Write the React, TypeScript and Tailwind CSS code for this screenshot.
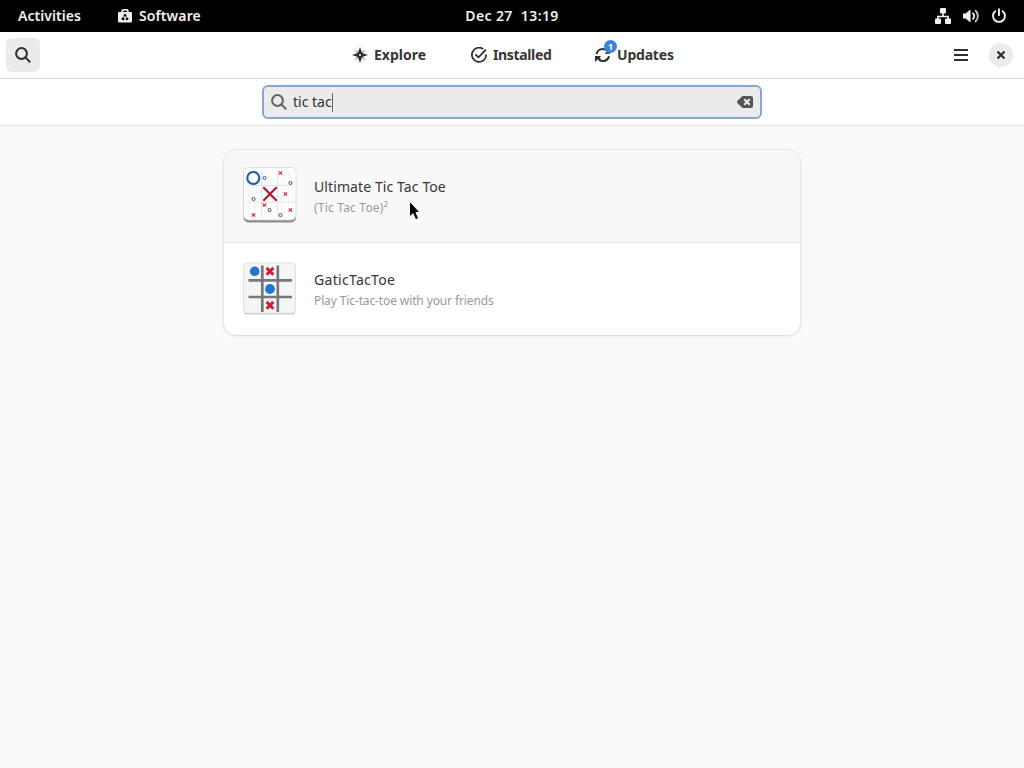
import type { ReactNode } from "react";

const font = "font-['Noto_Sans',sans-serif]";

function SearchIcon({ className }: { className?: string }) {
  return (
    <svg viewBox="0 0 16 16" className={className} fill="none" stroke="currentColor" strokeWidth="2">
      <circle cx="6.5" cy="6.5" r="5.4" />
      <path d="M10.4 10.4 15.2 15.2" />
    </svg>
  );
}

function BagIcon() {
  return (
    <svg viewBox="0 0 16 16" className="h-4 w-4">
      <path d="M5.200 4.500V3a1.200 1.200 0 0 1 1.200-1.200h3.200A1.200 1.200 0 0 1 10.800 3v1.500" fill="none" stroke="#eee" strokeWidth="1.800" />
      <path d="M2 4h12a1 1 0 0 1 1 1v8a1.500 1.500 0 0 1-1.500 1.500h-11A1.500 1.500 0 0 1 1 13V5a1 1 0 0 1 1-1z" fill="#eee" />
      <path d="M8 5.200 10 8.400H6z" fill="#000" />
      <rect x="4.700" y="9.500" width="2.600" height="2.600" fill="#000" />
      <circle cx="10" cy="10.800" r="1.400" fill="#000" />
    </svg>
  );
}

function NetworkIcon() {
  return (
    <svg viewBox="0 0 16 16" className="h-4 w-4" fill="#f2f2f2">
      <rect x="5" y="0" width="6" height="5.500" rx="1" />
      <rect x="0" y="10.500" width="6" height="5.500" rx="1" />
      <rect x="10" y="10.500" width="6" height="5.500" rx="1" />
      <path d="M7.200 5h1.600v2.700H14V11h-1.600V9.200H3.600V11H2V7.700h5.200z" />
    </svg>
  );
}

function VolumeIcon() {
  return (
    <svg viewBox="0 0 16 16" className="h-4 w-4" fill="none" stroke="#f2f2f2" strokeWidth="1.800" strokeLinecap="round">
      <path d="M0 5.500h2.500L7.500 1.500v13L2.500 10.500H0z" fill="#f2f2f2" stroke="none" />
      <path d="M10 5.300a3.600 3.600 0 0 1 0 5.400" />
      <path d="M12.600 2.600a7.600 7.600 0 0 1 0 10.800" stroke="#ccc" />
    </svg>
  );
}

function PowerIcon() {
  return (
    <svg viewBox="0 0 16 16" className="h-4 w-4" fill="none" stroke="#f2f2f2" strokeWidth="1.900" strokeLinecap="round">
      <path d="M4.300 3.200a6 6 0 1 0 7.400 0" />
      <path d="M8 1.200v6" />
    </svg>
  );
}

function ExploreIcon() {
  return (
    <svg viewBox="0 0 16 16" className="h-4 w-4">
      <path d="M2.400 2.400 8 6l5.600-3.600L10 8l3.600 5.600L8 10l-5.600 3.600L6 8z" fill="#a8a8a8" />
      <path d="M8 0l2.100 5.900L16 8l-5.900 2.100L8 16l-2.100-5.900L0 8l5.900-2.100z" fill="#2e2e2e" />
      <circle cx="8" cy="8" r="1" fill="#fff" />
    </svg>
  );
}

function InstalledIcon() {
  return (
    <svg viewBox="0 0 16 16" className="h-4 w-4" fill="none" stroke="#2e2e2e" strokeWidth="1.800">
      <path d="M12.200 2.100A7.100 7.100 0 1 0 15.100 7.500" />
      <path d="M4.300 7.300 7.500 10.300 14.900 2.600" />
    </svg>
  );
}

function UpdatesIcon() {
  return (
    <svg viewBox="0 0 16 16" className="h-4 w-4" fill="none" stroke="#2e2e2e" strokeWidth="2">
      <path d="M1.600 7A6.300 6.300 0 0 1 8 2.100c1.500 0 2.500.4 3.500 1.100" />
      <path d="M14.100 9.200A6.300 6.300 0 0 1 4 12.600" />
      <path d="M0 9h6.200L4.700 10.600 6 12l-1.500 1.500L3 12.200 0 15z" fill="#2e2e2e" stroke="none" />
      <path d="M9.500 6.800H15V1.500z" fill="#2e2e2e" stroke="none" />
    </svg>
  );
}

function Cross({ x, y, r, width, color = "#cf3347" }: { x: number; y: number; r: number; width: number; color?: string }) {
  return <path d={`M${x - r} ${y - r}l${2 * r} ${2 * r}M${x + r} ${y - r}l${-2 * r} ${2 * r}`} stroke={color} strokeWidth={width} />;
}

const smallCrosses = [[37.5, 6], [42.500, 27], [21.500, 38], [10.500, 48], [47.500, 43]];
const smallRings = [[21.500, 11], [47.500, 16], [10.500, 32], [26.500, 43], [37.500, 48]];

function UltimateIcon() {
  return (
    <svg viewBox="0 0 54 58" className="h-[58px] w-[54px]">
      <rect x="0.500" y="3" width="52.500" height="52.500" rx="5" fill="#8b8e8d" />
      <rect x="0.500" y="0.500" width="52.500" height="52.500" rx="5" fill="#fdfdfd" stroke="#d4d4d4" strokeWidth="0.700" />
      <path d="M18.500 3v48M34.500 3v48M3 18.500h48M3 35h48" stroke="#dedede" strokeWidth="0.800" />
      <path d="M23.500 4v13M29 20v13M40 4v46M45.500 4v46M6 20v30M12.500 37v13M36 9h15M20 13h13M3 25h14M36 30h15M3 41h14M20 45h13" stroke="#f0f0f0" strokeWidth="0.600" />
      <circle cx="10.300" cy="11" r="6" fill="none" stroke="#22599d" strokeWidth="2.100" />
      <Cross x={27} y={27} r={6.700} width={2.300} color="#ac1e32" />
      {smallCrosses.map(([x, y]) => <Cross key={`${x}-${y}`} x={x} y={y} r={1.700} width={1.200} />)}
      {smallRings.map(([x, y], index) => (
        <circle key={`${x}-${y}`} cx={x} cy={y} r="1.500" fill="none" stroke={index === 0 ? "#428bb7" : "#5c7486"} strokeWidth="1.200" />
      ))}
    </svg>
  );
}

function GaticIcon() {
  return (
    <svg viewBox="0 0 54 54" className="h-[54px] w-[54px]">
      <rect x="0.800" y="1.700" width="51.500" height="50.500" rx="3.500" fill="#b5b5b5" />
      <rect x="0.800" y="1" width="51.500" height="50.200" rx="3.500" fill="#f5f5f5" stroke="#dadada" strokeWidth="0.700" />
      <path d="M19.300 3.500V50M34.800 3.500V50M5.500 18.300H49M5.500 35H49" stroke="#77777a" strokeWidth="2.700" />
      <circle cx="11.700" cy="9.300" r="4.800" fill="#2176d2" />
      <circle cx="27" cy="27" r="4.900" fill="#2176d2" />
      <Cross x={27} y={9.300} r={3.400} width={2.900} color="#d31d2d" />
      <Cross x={27} y={43.300} r={3.400} width={2.900} color="#d31d2d" />
    </svg>
  );
}

function AppRow({ icon, name, summary, nameClass, summaryClass }: { icon: ReactNode; name: string; summary: string; nameClass: string; summaryClass: string }) {
  return (
    <>
      <div className="flex w-[71px] shrink-0 items-center">{icon}</div>
      <div className="pb-px whitespace-nowrap">
        <p className={`text-[14px] leading-[22px] text-[#363636] ${nameClass}`}>{name}</p>
        <p className={`mt-0.5 text-[12px] leading-4 text-[#999] ${summaryClass}`}>{summary}</p>
      </div>
    </>
  );
}

export default function App() {
  return (
    <div className={`flex h-screen w-full flex-col overflow-hidden bg-[#fafafa] text-[14px] whitespace-nowrap text-[#303030] ${font}`}>
      <div className="grid h-8 shrink-0 grid-cols-3 items-center bg-black font-semibold text-[#f0f0f0]">
        <div className="flex items-center pl-[18px]">
          <span className="w-[99px] pb-0.5 tracking-[0.05px]">Activities</span>
          <BagIcon />
          <span className="ml-1.5 pb-0.5 tracking-[0.1px]">Software</span>
        </div>
        <div className="pb-0.5 text-center tracking-[0.4px] whitespace-pre">Dec 27  13:19</div>
        <div className="flex items-center justify-end gap-3 pr-[17px]">
          <NetworkIcon />
          <VolumeIcon />
          <PowerIcon />
        </div>
      </div>

      <header className="flex h-[47px] shrink-0 items-center border-b border-[#dadada] bg-white pl-1.5">
        <button className="grid h-[34px] w-[34px] place-items-center rounded-[6px] bg-[#ebebeb]">
          <SearchIcon className="h-4 w-4 text-[#2e2e2e]" />
        </button>
        <nav className="ml-[312px] flex items-center font-bold text-[#363636]">
          <a className="flex w-[119px] items-center gap-1.5"><ExploreIcon /><span className="pb-0.5">Explore</span></a>
          <a className="flex w-[124px] items-center gap-1.5"><InstalledIcon /><span className="pb-0.5 tracking-[-0.35px]">Installed</span></a>
          <a className="flex items-center gap-1.5">
            <span className="relative block">
              <UpdatesIcon />
              <span className="absolute -top-[7px] left-[9px] grid h-[13px] w-[13px] place-items-center rounded-full bg-[#3584e4] text-[9px] leading-none text-white">1</span>
            </span>
            <span className="pb-0.5 tracking-[-0.2px]">Updates</span>
          </a>
        </nav>
        <div className="ml-auto flex items-center gap-[21px] pr-[11px]">
          <svg viewBox="0 0 14 12" className="h-3 w-3.5" stroke="#2e2e2e" strokeWidth="2"><path d="M0 1h14M0 6h14M0 11h14" /></svg>
          <span className="grid h-6 w-6 place-items-center rounded-full bg-[#ebebeb]">
            <svg viewBox="0 0 10 10" className="h-2.5 w-2.5" stroke="#2e2e2e" strokeWidth="2.200"><path d="m1.500 1.500 7 7M8.500 1.500l-7 7" /></svg>
          </span>
        </div>
      </header>

      <div className="flex h-[47px] shrink-0 justify-center border-b border-[#e3e3e3] bg-white pt-1.5">
        <div className="flex h-[34px] w-[500px] items-center rounded-[6px] border-2 border-[#83a8d2] bg-[#ebebeb] px-[7px]">
          <SearchIcon className="h-4 w-4 text-[#636363]" />
          <span className="ml-1.5 pb-0.5">tic tac</span>
          <span className="h-[19px] w-px bg-[#666]" />
          <svg viewBox="0 0 16 12" className="ml-auto h-3 w-4">
            <path d="M5.500 0H14a2 2 0 0 1 2 2v8a2 2 0 0 1-2 2H5.500L.600 7.200a1.700 1.700 0 0 1 0-2.400z" fill="#565656" />
            <path d="m7.300 3.300 5.400 5.400M12.700 3.300 7.300 8.700" stroke="#eee" strokeWidth="2" />
          </svg>
        </div>
      </div>

      <main className="flex justify-center pt-6">
        <ul className="w-[576px] overflow-hidden rounded-xl bg-white shadow-[0_0_0_1px_rgba(0,0,0,0.05),0_1px_3px_1px_rgba(0,0,0,0.06)]">
          <li className="flex h-[93px] items-center border-b border-[#e5e5e5] bg-[#f8f8f8] pl-[19px]">
            <AppRow icon={<UltimateIcon />} name="Ultimate Tic Tac Toe" summary="(Tic Tac Toe)²" nameClass="tracking-[0.1px]" summaryClass="tracking-[0.2px]" />
          </li>
          <li className="flex h-[92px] items-center pl-[19px]">
            <AppRow icon={<GaticIcon />} name="GaticTacToe" summary="Play Tic-tac-toe with your friends" nameClass="tracking-[0.3px]" summaryClass="tracking-[-0.12px]" />
          </li>
        </ul>
      </main>

      <svg viewBox="0 0 14 22" className="pointer-events-none absolute top-[200px] left-[408px] h-[22px] w-3.5">
        <path d="M1.500 1v16l3.500-3.300 2.700 6 3-1.300L8 12.600h4z" fill="#000" stroke="#fff" strokeWidth="1" />
      </svg>
    </div>
  );
}
